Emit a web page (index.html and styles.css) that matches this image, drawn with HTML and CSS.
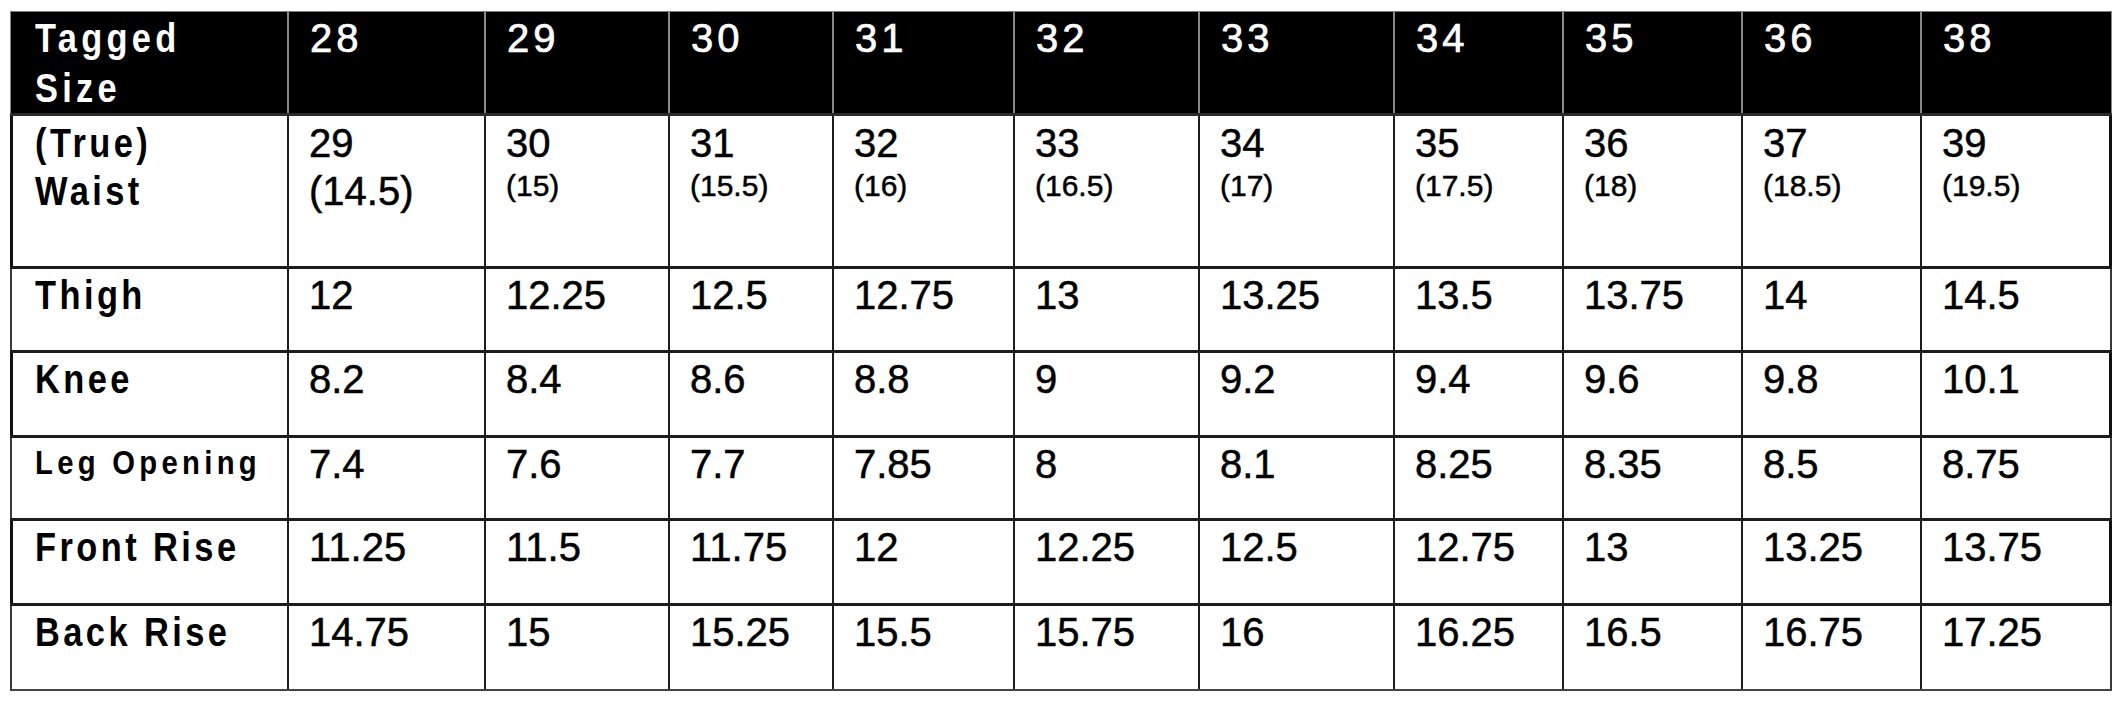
FILE: index.html
```html
<!DOCTYPE html>
<html lang="en">
<head>
<meta charset="utf-8">
<title>Size Chart</title>
<link rel="stylesheet" href="styles.css">
</head>
<body>
<div class="chart">
  <div class="row head">
    <div class="cell label head-label"><span class="lbl">Tagged<br>Size</span></div>
    <div class="cell hnum">28</div>
    <div class="cell hnum">29</div>
    <div class="cell hnum">30</div>
    <div class="cell hnum">31</div>
    <div class="cell hnum">32</div>
    <div class="cell hnum">33</div>
    <div class="cell hnum">34</div>
    <div class="cell hnum">35</div>
    <div class="cell hnum">36</div>
    <div class="cell hnum">38</div>
  </div>
  <div class="row waist strong">
    <div class="cell label"><span class="lbl">(True)<br>Waist</span></div>
    <div class="cell num"><span class="line">29</span><span class="line">(14.5)</span></div>
    <div class="cell num"><span class="line">30</span><span class="sub">(15)</span></div>
    <div class="cell num"><span class="line">31</span><span class="sub">(15.5)</span></div>
    <div class="cell num"><span class="line">32</span><span class="sub">(16)</span></div>
    <div class="cell num"><span class="line">33</span><span class="sub">(16.5)</span></div>
    <div class="cell num"><span class="line">34</span><span class="sub">(17)</span></div>
    <div class="cell num"><span class="line">35</span><span class="sub">(17.5)</span></div>
    <div class="cell num"><span class="line">36</span><span class="sub">(18)</span></div>
    <div class="cell num"><span class="line">37</span><span class="sub">(18.5)</span></div>
    <div class="cell num"><span class="line">39</span><span class="sub">(19.5)</span></div>
  </div>
  <div class="row thigh light">
    <div class="cell label"><span class="lbl">Thigh</span></div>
    <div class="cell num">12</div>
    <div class="cell num">12.25</div>
    <div class="cell num">12.5</div>
    <div class="cell num">12.75</div>
    <div class="cell num">13</div>
    <div class="cell num">13.25</div>
    <div class="cell num">13.5</div>
    <div class="cell num">13.75</div>
    <div class="cell num">14</div>
    <div class="cell num">14.5</div>
  </div>
  <div class="row knee strong">
    <div class="cell label"><span class="lbl">Knee</span></div>
    <div class="cell num">8.2</div>
    <div class="cell num">8.4</div>
    <div class="cell num">8.6</div>
    <div class="cell num">8.8</div>
    <div class="cell num">9</div>
    <div class="cell num">9.2</div>
    <div class="cell num">9.4</div>
    <div class="cell num">9.6</div>
    <div class="cell num">9.8</div>
    <div class="cell num">10.1</div>
  </div>
  <div class="row leg light">
    <div class="cell label label-small"><span class="lbl">Leg Opening</span></div>
    <div class="cell num">7.4</div>
    <div class="cell num">7.6</div>
    <div class="cell num">7.7</div>
    <div class="cell num">7.85</div>
    <div class="cell num">8</div>
    <div class="cell num">8.1</div>
    <div class="cell num">8.25</div>
    <div class="cell num">8.35</div>
    <div class="cell num">8.5</div>
    <div class="cell num">8.75</div>
  </div>
  <div class="row front strong">
    <div class="cell label"><span class="lbl">Front Rise</span></div>
    <div class="cell num">11.25</div>
    <div class="cell num">11.5</div>
    <div class="cell num">11.75</div>
    <div class="cell num">12</div>
    <div class="cell num">12.25</div>
    <div class="cell num">12.5</div>
    <div class="cell num">12.75</div>
    <div class="cell num">13</div>
    <div class="cell num">13.25</div>
    <div class="cell num">13.75</div>
  </div>
  <div class="row back light last">
    <div class="cell label"><span class="lbl">Back Rise</span></div>
    <div class="cell num">14.75</div>
    <div class="cell num">15</div>
    <div class="cell num">15.25</div>
    <div class="cell num">15.5</div>
    <div class="cell num">15.75</div>
    <div class="cell num">16</div>
    <div class="cell num">16.25</div>
    <div class="cell num">16.5</div>
    <div class="cell num">16.75</div>
    <div class="cell num">17.25</div>
  </div>
</div>
</body>
</html>
```

FILE: styles.css
```css
* {
  box-sizing: border-box;
}

html, body {
  margin: 0;
  padding: 0;
  background: #ffffff;
}

body {
  font-family: "Liberation Sans", Arial, sans-serif;
  color: #000;
}

.chart {
  margin: 11px 0 0 10px;
  width: 2102px;
  display: flex;
  flex-direction: column;
}

.row {
  display: grid;
  grid-template-columns: 277px 197px 184px 164px 181px 185px 195px 169px 179px 179px 192px;
  border-top: 3px solid #1c1c1c;
  background: #fff;
}

.row.head {
  background: #000;
  color: #fff;
  border-top: 1px solid #7a7a7a;
  height: 102px;
  box-shadow: inset 1px 0 #8a8a8a, inset -1px 0 #8a8a8a;
}

.row.waist { height: 153px; border-top-color: #2a2a2a; }
.row.thigh { height: 84px; }
.row.knee { height: 85px; }
.row.leg { height: 83px; }
.row.front { height: 85px; }
.row.back { height: 88px; }

.row.strong {
  box-shadow: inset 3px 0 #111, inset -3px 0 #111;
}

.row.light {
  box-shadow: inset 2px 0 #3a3a3a, inset -2px 0 #3a3a3a;
}

.row.last {
  border-bottom: 2px solid #444;
}

.cell {
  border-left: 2px solid #1e1e1e;
  padding: 2px 0 0 20px;
  font-size: 40px;
  line-height: 48px;
  white-space: nowrap;
}

.cell:first-child {
  border-left: none;
  padding-left: 25px;
}

.head .cell {
  border-left-color: #8a8a8a;
  padding-top: 2px;
}

.waist .cell {
  padding-top: 3px;
}

.label {
  font-weight: 700;
  letter-spacing: 4px;
}

.head .head-label {
  letter-spacing: 5px;
  line-height: 50px;
  padding-top: 1px;
}

.lbl {
  display: inline-block;
  transform: scaleX(0.86);
  transform-origin: left top;
}

.label-small {
  font-size: 34px;
  letter-spacing: 5px;
  padding-top: 0;
}

.hnum {
  letter-spacing: 4px;
  padding-left: 21px;
  -webkit-text-stroke: 0.7px #fff;
}

.num {
  display: flex;
  flex-direction: column;
  align-items: flex-start;
  -webkit-text-stroke: 0.5px #000;
}

.line {
  display: block;
}

.sub {
  display: block;
  font-size: 30px;
  line-height: 37px;
}
```
